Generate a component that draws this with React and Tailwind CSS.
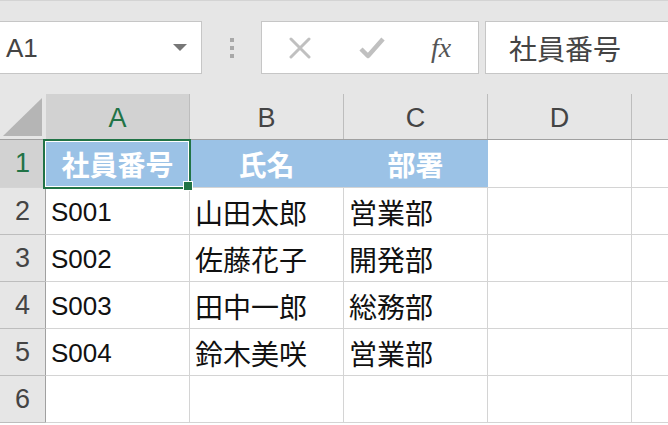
import React from "react";

const LAT = { fontFamily: "'Liberation Sans','Noto Sans CJK JP',sans-serif" };
const CJK = { fontFamily: "'Noto Sans CJK JP','Liberation Sans',sans-serif" };

const rows = [
  ["S001", "山田太郎", "営業部"],
  ["S002", "佐藤花子", "開発部"],
  ["S003", "田中一郎", "総務部"],
  ["S004", "鈴木美咲", "営業部"],
  ["", "", ""],
];

function Toolbar() {
  return (
    <div className="flex h-[94px] items-start border-t border-[#d4d4d4] bg-[#e6e6e6] pt-[20px]">
      {/* Name box */}
      <div className="flex h-[53px] w-[202px] items-center justify-between border border-l-0 border-[#c6c6c6] bg-white pl-[6px] pr-[14px]">
        <span className="text-[26px] leading-none text-[#444]" style={LAT}>
          A1
        </span>
        <svg width="14" height="8" viewBox="0 0 14 8">
          <path d="M0 0 L14 0 L7 7 Z" fill="#777" />
        </svg>
      </div>
      {/* dots */}
      <div className="flex h-[53px] w-[59px] flex-col items-center justify-center gap-[4px]">
        <div className="h-[4px] w-[4px] bg-[#a8a8a8]" />
        <div className="h-[4px] w-[4px] bg-[#a8a8a8]" />
        <div className="h-[4px] w-[4px] bg-[#a8a8a8]" />
      </div>
      {/* buttons */}
      <div className="flex h-[53px] w-[218px] items-center border border-[#c6c6c6] bg-white">
        <div className="flex w-[74px] justify-center pl-[1px]">
          <svg width="24" height="22" viewBox="0 0 24 22">
            <path d="M3 2 L21 20 M21 2 L3 20" stroke="#c0c0c0" strokeWidth="3" strokeLinecap="round" />
          </svg>
        </div>
        <div className="flex w-[72px] justify-center">
          <svg width="26" height="22" viewBox="0 0 26 22">
            <path d="M2 12 L9 19 L24 2" stroke="#c0c0c0" strokeWidth="4.5" fill="none" strokeLinejoin="round" />
          </svg>
        </div>
        <div className="flex flex-1 justify-center pr-[4px]">
          <span className="text-[28px] italic leading-none text-[#555]" style={{ fontFamily: "'Liberation Serif',serif" }}>
            fx
          </span>
        </div>
      </div>
      {/* formula input */}
      <div className="ml-[6px] flex h-[53px] flex-1 items-center border border-r-0 border-[#c6c6c6] bg-white pl-[23px]">
        <span className="text-[28px] leading-none text-[#444]" style={CJK}>
          社員番号
        </span>
      </div>
    </div>
  );
}

const colW = ["w-[144px]", "w-[154px]", "w-[144px]", "w-[144px]"];

function HeaderRow() {
  const letters = ["A", "B", "C", "D"];
  return (
    <div className="flex h-[46px] border-b border-[#a0a0a0] bg-[#e6e6e6]">
      <div className="relative w-[46px] border-r border-[#e6e6e6]">
        <svg className="absolute left-0 top-0" width="45" height="45" viewBox="0 0 45 45">
          <path d="M3 42 L42 42 L42 4 Z" fill="#b5b5b5" />
        </svg>
      </div>
      {letters.map((l, i) => (
        <div
          key={l}
          className={`${colW[i]} flex items-center justify-center border-r pt-[3px] text-[27px] leading-none ${
            i === 0 ? "border-[#bdbdbd] bg-[#d2d2d2] text-[#217346]" : "border-[#bdbdbd] text-[#444]"
          }`}
          style={LAT}
        >
          {l}
        </div>
      ))}
      <div className="flex-1" />
    </div>
  );
}

function RowHead({ n, selected }) {
  return (
    <div
      className={`flex w-[46px] items-center justify-center border-r border-[#a0a0a0] text-[27px] leading-none ${
        selected ? "bg-[#d2d2d2] text-[#217346]" : "bg-[#e6e6e6] text-[#444]"
      }`}
      style={LAT}
    >
      {n}
    </div>
  );
}

export default function App() {
  return (
    <div className="h-[425px] w-[668px] overflow-hidden bg-white">
      <Toolbar />
      <HeaderRow />
      {/* Row 1 */}
      <div className="relative flex h-[48px] border-b border-[#d4d4d4]">
        <div className="flex w-[46px] border-b-0">
          <RowHead n="1" selected />
        </div>
        {["社員番号", "氏名", "部署"].map((t, i) => (
          <div
            key={t}
            className={`${colW[i]} flex items-center justify-center border-r border-[#9bc2e6] bg-[#9bc2e6] text-[28px] font-bold leading-none text-white`}
            style={CJK}
          >
            {t}
          </div>
        ))}
        <div className={`${colW[3]} border-r border-[#d4d4d4]`} />
        <div className="flex-1" />
        {/* selection */}
        <div className="absolute left-[43px] top-[-1px] h-[50px] w-[148px] border-2 border-[#217346]">
          <div className="h-full w-full border border-white" />
        </div>
        <div className="absolute left-[183px] top-[41px] h-[10px] w-[10px] border border-white bg-[#217346]" />
      </div>
      {rows.map((r, ri) => (
        <div key={ri} className="flex h-[47px] border-b border-[#d4d4d4]">
          <div className="flex w-[46px] border-b border-[#bdbdbd] -mb-px">
            <RowHead n={String(ri + 2)} />
          </div>
          {r.map((t, i) => (
            <div
              key={i}
              className={`${colW[i]} flex items-center border-r border-[#d4d4d4] pl-[5px] pt-[2px] leading-none text-[#111] ${
                i === 0 ? "text-[26px]" : "text-[28px]"
              }`}
              style={i === 0 ? LAT : CJK}
            >
              {t}
            </div>
          ))}
          <div className={`${colW[3]} border-r border-[#d4d4d4]`} />
          <div className="flex-1" />
        </div>
      ))}
    </div>
  );
}
